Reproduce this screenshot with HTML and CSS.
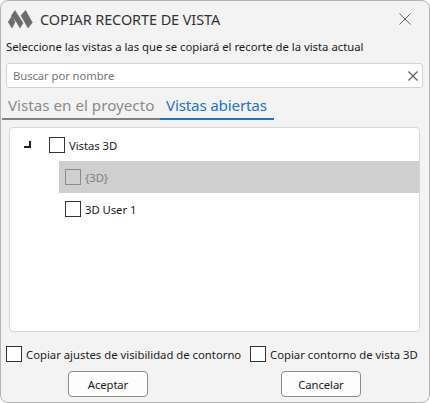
FILE: index.html
```html
<!DOCTYPE html>
<html lang="es">
<head>
<meta charset="utf-8">
<title>Copiar recorte de vista</title>
<link rel="stylesheet" href="styles.css">
</head>
<body>
<div class="window">
  <header class="titlebar">
    <svg class="logo" width="25" height="19" viewBox="0 0 25 19"><g fill="#6b6b6b" stroke="#6b6b6b" stroke-width=".6" stroke-linejoin="round"><path d="M.3 12 4 6l3 6-3 6z"/><path d="M3.500 5.500 7 .5 15 13l-3 5-3.500-6z"/><path d="M13 5.500 17.500.5 24.300 12.500 20 18z"/></g></svg>
    <h1 class="title">COPIAR RECORTE DE VISTA</h1>
    <svg class="close" width="12" height="12" viewBox="0 0 12 12"><path d="M.5.500l11 11M11.500.500l-11 11" stroke="#666" fill="none"/></svg>
  </header>
  <p class="hint">Seleccione las vistas a las que se copiará el recorte de la vista actual</p>
  <div class="search">
    <span class="placeholder">Buscar por nombre</span>
    <svg width="12" height="12" viewBox="0 0 12 12"><path d="M1.500 1.500l9 9M10.500 1.500l-9 9" stroke="#666" stroke-width="1.400" fill="none"/></svg>
  </div>
  <nav class="tabs">
    <span class="tab">Vistas en el proyecto</span>
    <span class="tab active">Vistas abiertas</span>
  </nav>
  <section class="tree">
    <div class="row root">
      <svg class="expander" width="8" height="8" viewBox="0 0 8 8"><path d="M6 0h2v7H1V5h5z" fill="#222"/></svg>
      <span class="box"></span><span>Vistas 3D</span>
    </div>
    <div class="row child selected"><span class="box"></span><span>{3D}</span></div>
    <div class="row child"><span class="box"></span><span>3D User 1</span></div>
  </section>
  <div class="options">
    <label class="option wide"><span class="box"></span>Copiar ajustes de visibilidad de contorno</label>
    <label class="option"><span class="box"></span>Copiar contorno de vista 3D</label>
  </div>
  <footer class="actions">
    <button class="btn">Aceptar</button>
    <button class="btn">Cancelar</button>
  </footer>
</div>
</body>
</html>
```
FILE: styles.css
```css
* { box-sizing: border-box; }
html, body { margin: 0; background: #fff; }
body { font-family: "Noto Sans", "Open Sans", sans-serif; color: #1b1b1b; }
.window {
  width: 430px; height: 403px;
  background: #f3f3f3;
  border: 1px solid #b4b4b4;
  border-radius: 8px;
  display: flex; flex-direction: column;
  overflow: hidden;
}
.titlebar { height: 36px; display: flex; align-items: center; padding: 0 18px 0 7px; flex: none; }
.logo { flex: none; }
.title { margin: 0 0 0 7px; font-size: 14.500px; font-weight: 400; color: #333; flex: 1; white-space: nowrap; letter-spacing: -.1px; }
.hint { margin: 0; padding-left: 5px; height: 19px; line-height: 19px; font-size: 11.300px; white-space: nowrap; letter-spacing: 0; flex: none; }
.search {
  margin: 7px 6px 0 5px; height: 25px; flex: none;
  background: #fff; border: 1px solid #d3d3d3; border-radius: 3px;
  display: flex; align-items: center; justify-content: space-between;
  padding: 0 3px 0 6px;
}
.placeholder { font-size: 11.300px; color: #777; letter-spacing: -.08px; }
.tabs { display: flex; margin: 6px 0 0 1px; width: 272px; height: 26px; flex: none; }
.tab {
  padding: 0 0 0 6px; height: 26px; line-height: 22px; font-size: 15.200px;
  color: #8a8a8a; border-bottom: 2px solid #808080; white-space: nowrap; letter-spacing: 0;
  width: 158px;
}
.tab.active { color: #1a73d6; border-bottom-color: #1a73d6; width: 114px; padding-left: 6px; letter-spacing: -.18px; }
.tree {
  margin: 7px 9px 0 8px; height: 205px; flex: none;
  background: #fff; border: 1px solid #d8d8d8; border-radius: 4px;
  padding: 1px 0;
  display: flex; flex-direction: column;
}
.row { display: flex; align-items: center; font-size: 11.300px; letter-spacing: -.05px; white-space: nowrap; height: 32px; }
.root { padding-left: 13px; }
.expander { margin-right: 18px; flex: none; }
.child { margin-left: 49px; padding-left: 6px; }
.selected { background: #cfcfcf; color: #808080; }
.box { width: 16px; height: 16px; border: 1px solid #333; background: #fff; flex: none; margin-right: 4px; }
.selected .box { border-color: #8a8a8a; background: #cfcfcf; }
.options { display: flex; margin: 13px 0 0 5px; height: 18px; flex: none; }
.option { display: flex; align-items: center; font-size: 11.300px; letter-spacing: 0; white-space: nowrap; }
.option.wide { width: 244px; }
.option .box { margin-right: 4px; }
.actions { display: flex; justify-content: space-between; margin: 8px 68px 0 67px; flex: none; }
.btn {
  width: 80px; height: 26px; background: #fdfdfd;
  border: 1px solid #8a8a8a; border-radius: 4px;
  font: inherit; font-size: 11.300px; color: #1b1b1b; padding: 0; letter-spacing: -.1px;
}
```
